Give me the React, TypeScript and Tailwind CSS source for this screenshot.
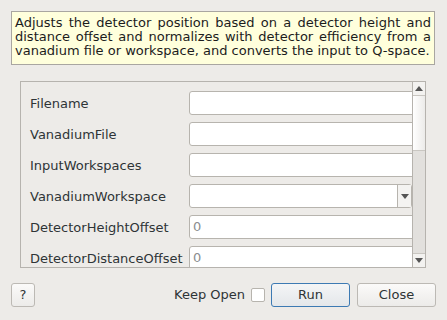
const font = { fontFamily: '"DejaVu Sans", "Liberation Sans", sans-serif' };

function TextRow({ label, value }: { label: string; value?: string }) {
  return (
    <div className="flex h-[24px] items-center">
      <div className="w-[159px] shrink-0 pt-[1px] text-[13px] text-[#2e3436]">{label}</div>
      <div className="flex h-[24px] w-[240px] shrink-0 items-center rounded-l-[3px] border border-[#b7b4ae] bg-white pl-[3px] text-[13px] text-[#8b8e8f]">
        {value}
      </div>
    </div>
  );
}

function ComboRow({ label }: { label: string }) {
  return (
    <div className="flex h-[24px] items-center">
      <div className="w-[159px] shrink-0 pt-[1px] text-[13px] text-[#2e3436]">{label}</div>
      <div className="flex h-[24px] w-[223px] shrink-0 rounded-[3px] border border-[#b7b4ae] bg-white">
        <div className="flex-1" />
        <div className="flex w-[14px] items-center justify-center border-l border-[#b7b4ae] bg-[#f4f3f1]">
          <Tri down />
        </div>
      </div>
    </div>
  );
}

function Tri({ down }: { down?: boolean }) {
  return (
    <svg width="8" height="5" viewBox="0 0 8 5">
      {down ? <polygon points="0,0 8,0 4,5" fill="#555" /> : <polygon points="0,5 8,5 4,0" fill="#555" />}
    </svg>
  );
}

export default function App() {
  return (
    <div className="relative h-[320px] w-[447px] overflow-hidden bg-[#edebe8]" style={font}>
      {/* Description */}
      <div className="ml-[11px] mt-[11px] h-[54px] w-[424px] border border-[#a9a6a1] bg-[#ffffdc] px-[3px] pt-[4px] text-justify text-[13px] leading-[14px] text-[#1c1c1c]">
        Adjusts the detector position based on a detector height and distance offset and normalizes with detector efficiency from a vanadium file or workspace, and converts the input to Q-space.
      </div>

      {/* Properties scroll area */}
      <div className="ml-[20px] mt-[16px] flex h-[187px] w-[406px] border border-[#b6b3ae]">
        <div className="flex-1 overflow-hidden">
          <div className="flex flex-col gap-[7px] pl-[9px] pt-[9px]">
            <TextRow label="Filename" />
            <TextRow label="VanadiumFile" />
            <TextRow label="InputWorkspaces" />
            <ComboRow label="VanadiumWorkspace" />
            <TextRow label="DetectorHeightOffset" value="0" />
            <TextRow label="DetectorDistanceOffset" value="0" />
          </div>
        </div>
        <div className="flex w-[13px] flex-col border-l border-[#b6b3ae] bg-[#e2e0dd]">
          <div className="flex h-[14px] items-center justify-center border-b border-[#c9c6c1] bg-[#f3f2f0]">
            <Tri />
          </div>
          <div className="h-[55px] border-b border-[#c9c6c1] bg-gradient-to-r from-[#ffffff] to-[#ecebe9]" />
          <div className="flex-1" />
          <div className="flex h-[14px] items-center justify-center border-t border-[#c9c6c1] bg-[#f3f2f0]">
            <Tri down />
          </div>
        </div>
      </div>

      {/* Buttons */}
      <div className="mt-[15px] flex h-[24px] items-center px-[11px]">
        <button className="h-[24px] w-[24px] rounded-[3px] border border-[#bcb9b4] bg-gradient-to-b from-[#fbfaf9] to-[#ecebe9] text-[13px] text-[#2e3436]">
          ?
        </button>
        <div className="flex-1" />
        <span className="text-[13px] text-[#2e3436]">Keep Open</span>
        <div className="ml-[6px] h-[14px] w-[14px] rounded-[2px] border border-[#b7b4ae] bg-white" />
        <button className="ml-[6px] h-[24px] w-[79px] rounded-[3px] border border-[#3d7ab3] bg-gradient-to-b from-[#f4f5f6] to-[#e4e7ea] text-[13px] text-[#2e3436]">
          Run
        </button>
        <button className="ml-[7px] h-[24px] w-[79px] rounded-[3px] border border-[#bcb9b4] bg-gradient-to-b from-[#fbfaf9] to-[#ecebe9] text-[13px] text-[#2e3436]">
          Close
        </button>
      </div>
    </div>
  );
}
